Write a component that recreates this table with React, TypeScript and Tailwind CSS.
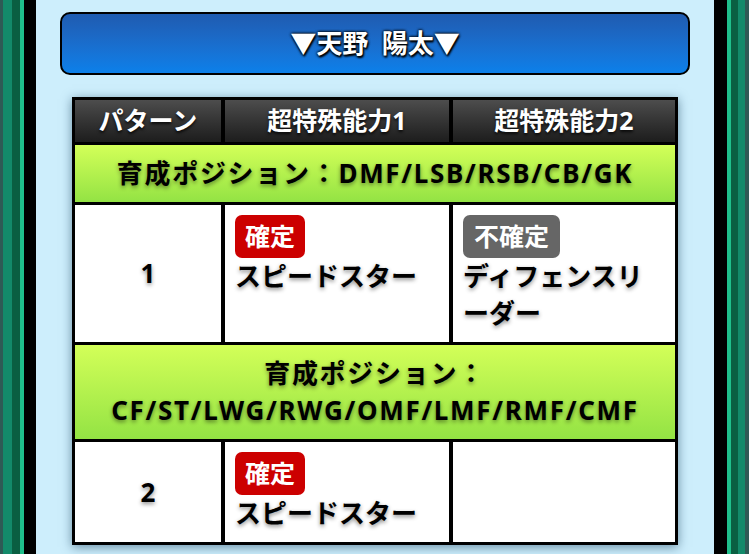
const font = { fontFamily: '"Noto Sans", "Noto Sans CJK JP", sans-serif' };

const darkShadow = "[text-shadow:0_2px_4px_rgba(0,0,0,0.45)]";

type Ability = { tag: string; sure: boolean; name: string } | null;

const Badge = ({ sure, tag }: { sure: boolean; tag: string }) => (
  <span
    className={
      sure
        ? "inline-flex h-[43px] items-center rounded-[7px] bg-[#cc0000] px-[10px] text-[25px] leading-none text-white"
        : "inline-flex h-[43px] items-center rounded-[7px] bg-[#666666] px-[11px] text-[25px] leading-none text-white"
    }
  >
    {tag}
  </span>
);

const AbilityCell = ({ ability }: { ability: Ability }) => (
  <div className="bg-white px-[10px] py-[10px]">
    {ability && (
      <>
        <Badge sure={ability.sure} tag={ability.tag} />
        <p className={`text-[26px] leading-[37px] text-black ${darkShadow}`}>{ability.name}</p>
      </>
    )}
  </div>
);

const rows: { positions: string[]; pattern: string; first: Ability; second: Ability }[] = [
  {
    positions: ["育成ポジション：DMF/LSB/RSB/CB/GK"],
    pattern: "1",
    first: { tag: "確定", sure: true, name: "スピードスター" },
    second: { tag: "不確定", sure: false, name: "ディフェンスリーダー" },
  },
  {
    positions: ["育成ポジション：", "CF/ST/LWG/RWG/OMF/LMF/RMF/CMF"],
    pattern: "2",
    first: { tag: "確定", sure: true, name: "スピードスター" },
    second: null,
  },
];

const Stripes = ({ side }: { side: "left" | "right" }) =>
  side === "left" ? (
    <div className="flex h-full shrink-0">
      <div className="w-[3px] bg-[#2e5a55]" />
      <div className="w-[9px] bg-[#138a6a]" />
      <div className="w-[8px] bg-[#0a5f42]" />
      <div className="w-[4px] bg-[#1fbf8b]" />
      <div className="w-[12px] bg-black" />
    </div>
  ) : (
    <div className="flex h-full shrink-0">
      <div className="w-[13px] bg-black" />
      <div className="w-[4px] bg-[#1fbf8b]" />
      <div className="w-[7px] bg-[#0a5f42]" />
      <div className="w-[7px] bg-[#138a6a]" />
      <div className="w-[4px] bg-[#2e5a55]" />
    </div>
  );

export default function App() {
  return (
    <div className="flex h-[554px] w-[749px] overflow-hidden font-bold" style={font}>
      <Stripes side="left" />

      <main className="flex-1 bg-[#cdeefc] px-[24px] pt-[12px]">
        {/* player name banner */}
        <div className="flex h-[63px] items-center justify-center rounded-[10px] border-2 border-black bg-linear-to-b from-[#1f5bb0] to-[#0b80ea]">
          <h1 className="text-[26px] text-white [text-shadow:0_0_3px_#000,0_0_3px_#000,1px_2px_2px_#000]">
            ▼天野&nbsp;&nbsp;陽太▼
          </h1>
        </div>

        <div className="mx-[12px] mt-[22px] grid grid-cols-[146px_224px_1fr] gap-x-[4px] gap-y-[3px] bg-black p-[3px] shadow-[0_2px_10px_rgba(20,60,90,0.55)]">
          {["パターン", "超特殊能力1", "超特殊能力2"].map((h) => (
            <div
              key={h}
              className="flex h-[42px] items-center justify-center bg-linear-to-b from-[#4d4d4d] to-[#1d1d1d] text-[25px] text-white [text-shadow:0_2px_3px_rgba(0,0,0,0.8)]"
            >
              {h}
            </div>
          ))}

          {rows.map((r) => (
            <div key={r.pattern} className="contents">
              <div
                className={`col-span-3 bg-linear-to-b from-[#d3ff58] to-[#93e344] py-[10px] text-center text-[26px] leading-[37px] tracking-[1.7px] text-black ${darkShadow}`}
              >
                {r.positions.map((line) => (
                  <p key={line}>{line}</p>
                ))}
              </div>
              <div className={`flex items-center justify-center bg-white text-[26px] text-black ${darkShadow}`}>
                {r.pattern}
              </div>
              <AbilityCell ability={r.first} />
              <AbilityCell ability={r.second} />
            </div>
          ))}
        </div>
      </main>

      <Stripes side="right" />
    </div>
  );
}
